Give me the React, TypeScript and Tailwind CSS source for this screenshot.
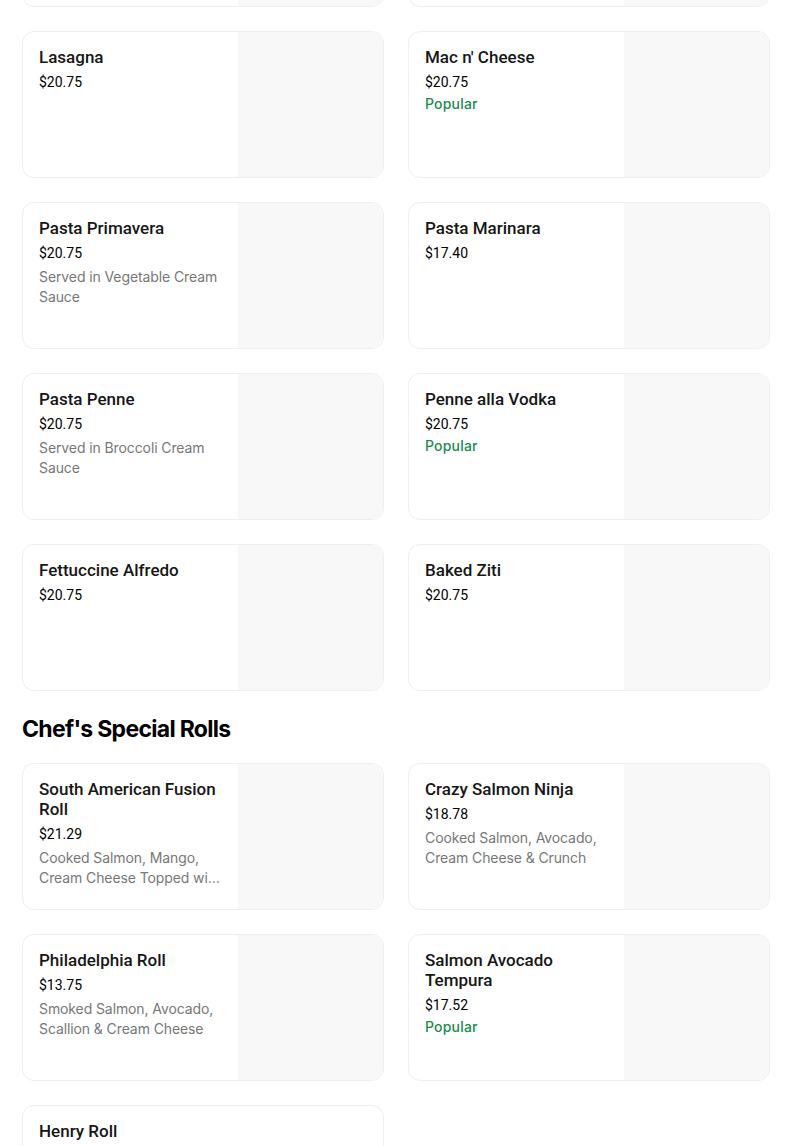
import React from 'react';

type Item = {
    name: string;
    price: string;
    desc?: string;
    popular?: boolean;
    noImage?: boolean;
};

const topRow: Item[] = [
    { name: '', price: '' },
    { name: '', price: '' },
];

const pasta: Item[] = [
    { name: 'Lasagna', price: '$20.75' },
    { name: "Mac n' Cheese", price: '$20.75', popular: true },
    { name: 'Pasta Primavera', price: '$20.75', desc: 'Served in Vegetable Cream Sauce' },
    { name: 'Pasta Marinara', price: '$17.40' },
    { name: 'Pasta Penne', price: '$20.75', desc: 'Served in Broccoli Cream Sauce' },
    { name: 'Penne alla Vodka', price: '$20.75', popular: true },
    { name: 'Fettuccine Alfredo', price: '$20.75' },
    { name: 'Baked Ziti', price: '$20.75' },
];

const rolls: Item[] = [
    {
        name: 'South American Fusion Roll',
        price: '$21.29',
        desc: 'Cooked Salmon, Mango, Cream Cheese Topped with Seared Salmon & Spicy Mayo',
    },
    { name: 'Crazy Salmon Ninja', price: '$18.78', desc: 'Cooked Salmon, Avocado, Cream Cheese & Crunch' },
    { name: 'Philadelphia Roll', price: '$13.75', desc: 'Smoked Salmon, Avocado, Scallion & Cream Cheese' },
    { name: 'Salmon Avocado Tempura', price: '$17.52', popular: true },
    { name: 'Henry Roll', price: '$14.50', noImage: true },
];

const ItemCard: React.FC<{ item: Item }> = ({ item }) => (
    <div className="flex h-[147px] overflow-hidden rounded-xl border border-[#efefef] bg-white">
        <div className="w-[215px] shrink-0 px-4 pt-[15px]">
            <div className="font-['Roboto',sans-serif] text-[17px] font-medium leading-5 text-[#161616]">{item.name}</div>
            <div className="mt-[5px] font-['Roboto',sans-serif] text-sm leading-5 text-black">{item.price}</div>
            {item.popular && (
                <div className="mt-[2px] text-sm font-medium leading-5 tracking-[0.2px] text-[#1a8a50]">Popular</div>
            )}
            {item.desc && (
                <div className="mt-[4px] line-clamp-2 text-sm leading-5 tracking-[-0.1px] text-[#777]">{item.desc}</div>
            )}
        </div>
        {!item.noImage && <div className="flex-1 bg-[#f8f8f8]" />}
    </div>
);

export default function App() {
    return (
        <div className="h-[1146px] overflow-hidden bg-white font-['Inter',sans-serif]">
            <div className="ml-[22px] w-[750px]">
                <div className="-mt-[140px] grid grid-cols-[362px_362px] gap-x-6 gap-y-6">
                    {topRow.map((item, i) => (
                        <ItemCard key={'t' + i} item={item} />
                    ))}
                    {pasta.map((item) => (
                        <ItemCard key={item.name} item={item} />
                    ))}
                </div>
                <h2 className="mt-6 mb-5 text-[23px] font-bold leading-7 tracking-[-0.7px] text-black">
                    Chef's Special Rolls
                </h2>
                <div className="grid grid-cols-[362px_362px] gap-x-6 gap-y-6">
                    {rolls.map((item) => (
                        <ItemCard key={item.name} item={item} />
                    ))}
                </div>
            </div>
        </div>
    );
}
